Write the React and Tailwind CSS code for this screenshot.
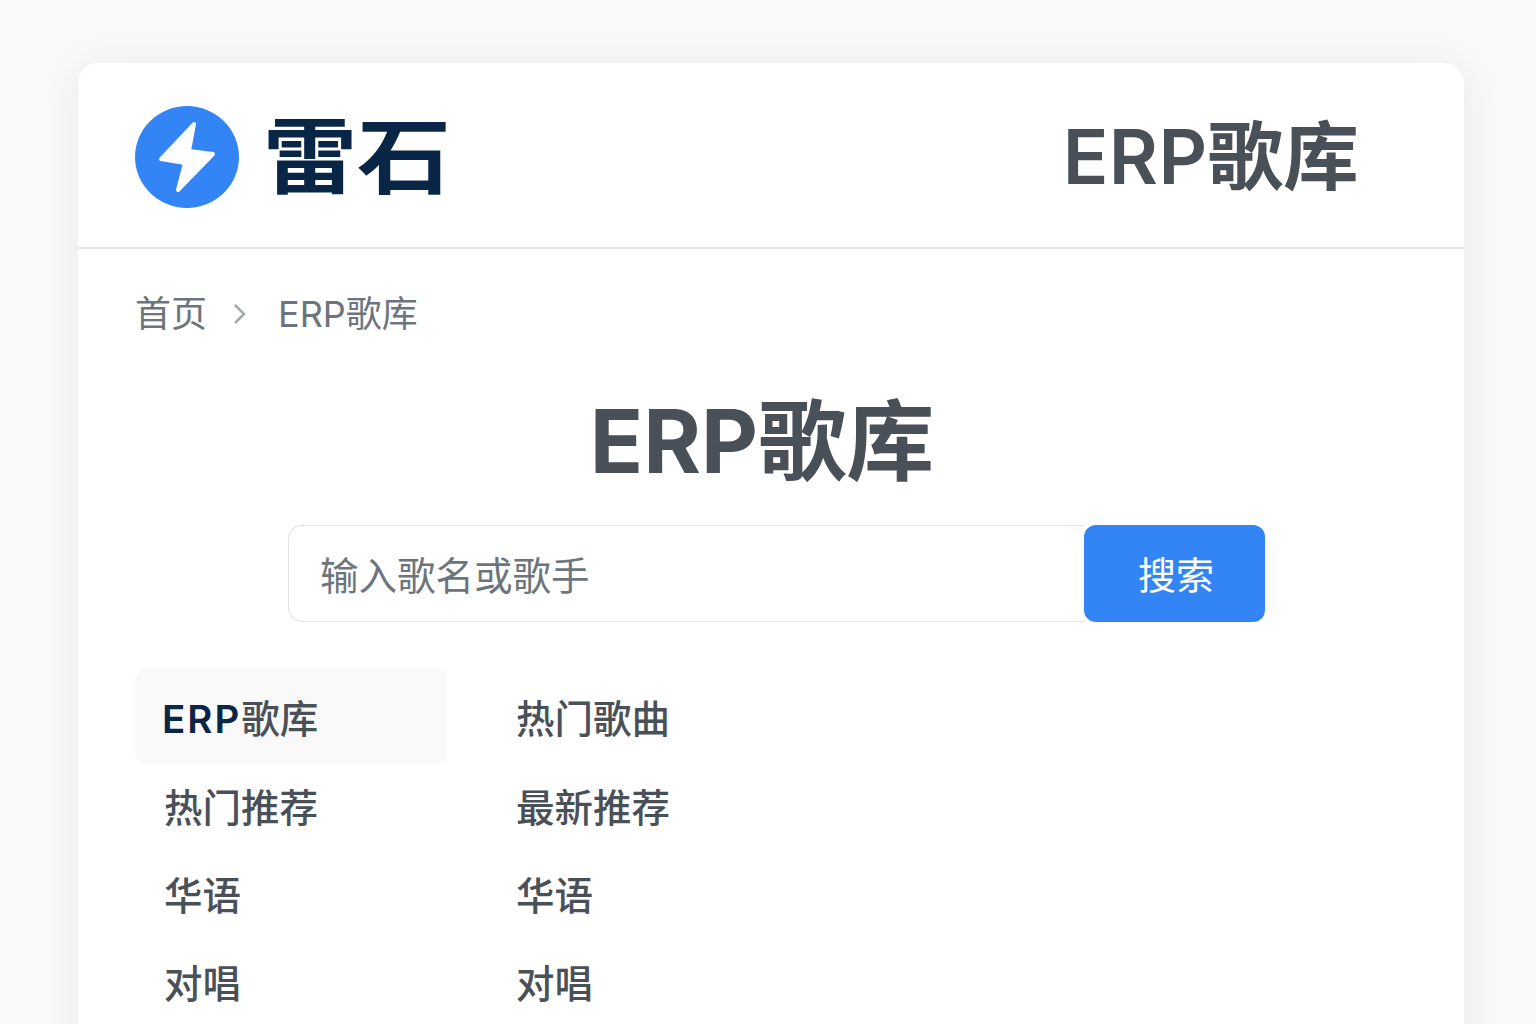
import React from 'react';

const CATEGORIES = [
  ['ERP歌库', '热门歌曲'],
  ['热门推荐', '最新推荐'],
  ['华语', '华语'],
  ['对唱', '对唱'],
];

const Logo = () => (
  <svg width="104" height="102" viewBox="0 0 104 102" className="shrink-0">
    <ellipse cx="52" cy="51" rx="52" ry="51" fill="#3385f5" />
    <path
      d="M59 18 L54 45 L78 48 L43 84 L50 57 L26 53 Z"
      fill="#ffffff"
      stroke="#ffffff"
      strokeWidth="4"
      strokeLinejoin="round"
    />
  </svg>
);

export default function App() {
  return (
    <div className="h-screen overflow-hidden bg-[#f9f9fa] pl-[78px] pr-[72px] pt-[63px] font-['Inter','Noto_Sans_CJK_SC',sans-serif]">
      <div className="rounded-[20px] bg-white shadow-[0_4px_40px_rgba(0,0,0,0.07)] min-h-[1100px]">
        {/* Header */}
        <header className="flex h-[186px] items-center justify-between border-b-2 border-[#e6e8ea] pl-[57px] pr-[105px] pt-[4px]">
          <div className="flex items-center gap-[24px]">
            <Logo />
            <span className="scale-y-[0.88] text-[94px] font-bold leading-none text-[#0a2647]">雷石</span>
          </div>
          <span className="text-[75.5px] font-semibold leading-none tracking-[0.3px] text-[#495057]">ERP歌库</span>
        </header>

        {/* Breadcrumb */}
        <nav className="flex items-center pl-[57px] pt-[43px] text-[36px] leading-[44px] text-[#6c757d]">
          <span>首页</span>
          <svg width="16" height="24" viewBox="0 0 16 24" fill="none" className="ml-[25px] mr-[30px]">
            <path d="M3 3 L12 12 L3 21" stroke="#a3a8ad" strokeWidth="2.5" />
          </svg>
          <span>ERP歌库</span>
        </nav>

        {/* Title */}
        <h1 className="mt-[45px] pr-[18px] text-center text-[88px] font-bold leading-[120px] text-[#495057]">ERP歌库</h1>

        {/* Search */}
        <div className="ml-[210px] mt-[24px] flex h-[97px] w-[977px]">
          <div className="flex flex-1 items-center rounded-l-[14px] border-[1.5px] border-r-0 border-[#e0e2e4] pl-[31px] pt-[6px] text-[38.5px] text-[#6c757d]">
            输入歌名或歌手
          </div>
          <button className="w-[181px] rounded-[12px] bg-[#3385f5] pl-[3px] pt-[3px] text-[38px] text-white">搜索</button>
        </div>

        {/* Categories */}
        <div className="mt-[46px] grid w-[710px] grid-cols-[312px_312px] gap-x-[41px] pl-[57px]">
          {CATEGORIES.map(([left, right], i) => (
            <React.Fragment key={i}>
              <div
                className={`flex items-center text-[38.5px] font-medium text-[#495057] ${
                  i === 0 ? 'mb-[1px] h-[96px] rounded-[12px] bg-[#f9f9f9] pl-[27px] pt-[7px] text-[#212529]' : 'h-[88px] pl-[29px]'
                }`}
              >
                {i === 0 ? (
                  <span>
                    <span className="font-semibold tracking-[2px] text-[#0a2647]">ERP</span>歌库
                  </span>
                ) : (
                  left
                )}
              </div>
              <div className={`flex items-center pl-[28px] text-[38.5px] font-medium text-[#495057] ${i === 0 ? 'mb-[1px] h-[96px] pt-[7px]' : 'h-[88px]'}`}>
                {right}
              </div>
            </React.Fragment>
          ))}
        </div>
      </div>
    </div>
  );
}
